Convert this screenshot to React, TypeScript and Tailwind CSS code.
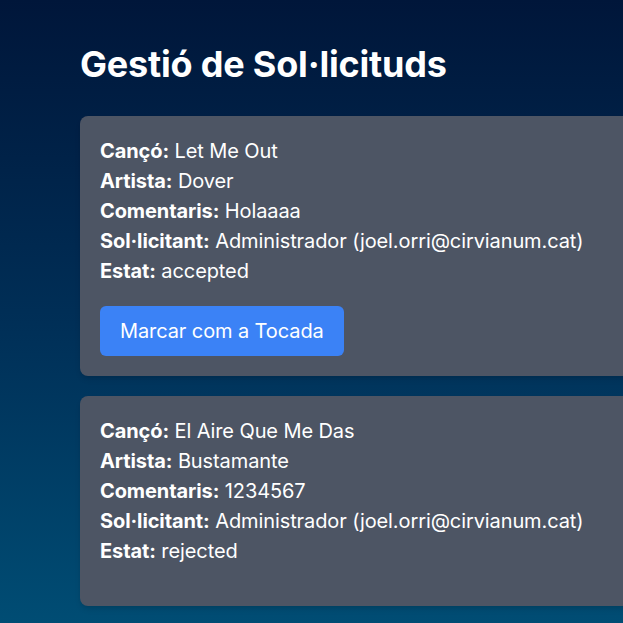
const requests = [
  {
    song: "Let Me Out",
    artist: "Dover",
    comments: "Holaaaa",
    requester: "Administrador (joel.orri@cirvianum.cat)",
    status: "accepted",
  },
  {
    song: "El Aire Que Me Das",
    artist: "Bustamante",
    comments: "1234567",
    requester: "Administrador (joel.orri@cirvianum.cat)",
    status: "rejected",
  },
];

const Row = ({ label, value }: { label: string; value: string }) => (
  <p className="leading-[30px]">
    <span className="font-bold">{label}:</span> {value}
  </p>
);

export default function App() {
  return (
    <div className="w-screen min-h-screen overflow-hidden bg-gradient-to-b from-[#00163a] via-[#002f57] to-[#004f76] font-['Inter',sans-serif] text-white">
      <div className="pl-[80px] pt-[44px] pb-10 w-[900px]">
        <h1 className="text-4xl font-bold mb-8 tracking-[-0.2px]">Gestió de Sol·licituds</h1>
        <div className="flex flex-col gap-5">
          {requests.map((r, i) => (
            <div key={i} className="bg-[#4d5564] rounded-lg p-5 text-xl tracking-[-0.1px] shadow-md">
              <Row label="Cançó" value={r.song} />
              <Row label="Artista" value={r.artist} />
              <Row label="Comentaris" value={r.comments} />
              <Row label="Sol·licitant" value={r.requester} />
              <Row label="Estat" value={r.status} />
              {r.status === "accepted" ? (
                <button className="mt-5 bg-[#3b82f6] rounded-md px-5 py-[10px] leading-[30px] text-white">
                  Marcar com a Tocada
                </button>
              ) : (
                <div className="h-5" />
              )}
            </div>
          ))}
        </div>
      </div>
    </div>
  );
}
